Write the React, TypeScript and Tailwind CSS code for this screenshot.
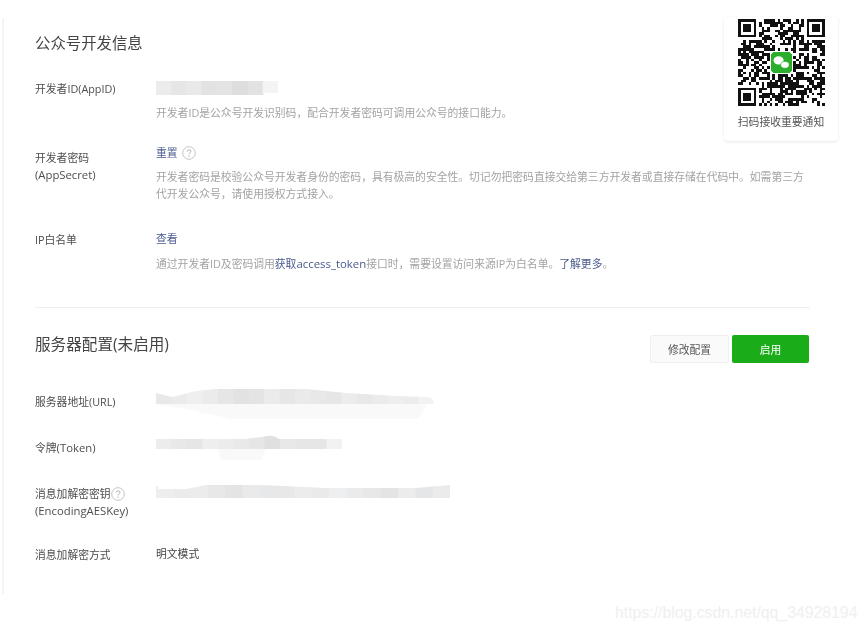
import { useMemo } from "react";

const link = "text-[#4a5a8f]";

function Help({ size = 14 }: { size?: number }) {
  return (
    <svg width={size} height={size} viewBox="0 0 14 14" className="inline-block shrink-0">
      <circle cx="7" cy="7" r="6.3" fill="none" stroke="#b5b5b5" strokeWidth="0.8" />
      <path d="M5.2 5.6c0-1.1.8-1.8 1.9-1.8s1.8.7 1.8 1.6c0 1.3-1.8 1.5-1.8 3" fill="none" stroke="#a0a0a0" strokeWidth="0.9" />
      <circle cx="7.1" cy="10.1" r="0.6" fill="#a0a0a0" />
    </svg>
  );
}

// mosaic that hides a value in the screenshot
function Smudge({ width, height, tones, shape, under }: { width: number; height: number; tones: string[]; shape: string; under?: string }) {
  const cell = width / tones.length;
  const id = shape.length + "-" + width;
  return (
    <svg width={width} height={height} viewBox={`0 0 ${width} ${height}`} className="block">
      <defs>
        <clipPath id={`c${id}`}>
          <path d={shape} />
        </clipPath>
      </defs>
      {under && <path d={under} fill="#f9f9f9" />}
      <g clipPath={`url(#c${id})`}>
        {tones.map((t, i) => (
          <rect key={i} x={i * cell} y={0} width={cell + 0.5} height={height} fill={t} />
        ))}
      </g>
    </svg>
  );
}

function Qr() {
  const size = 33;
  const cells = useMemo(() => {
    const out: [number, number][] = [];
    let seed = 20417;
    const inFinder = (x: number, y: number, ox: number, oy: number) => x >= ox - 1 && x <= ox + 7 && y >= oy - 1 && y <= oy + 7;
    for (let y = 0; y < size; y++) {
      for (let x = 0; x < size; x++) {
        seed = (seed * 1103515 + 12345) & 0x7fffffff;
        if (inFinder(x, y, 0, 0) || inFinder(x, y, 26, 0) || inFinder(x, y, 0, 26)) continue;
        if ((seed >> 12) % 100 < 58) out.push([x, y]);
      }
    }
    return out;
  }, []);
  const finders = [[0, 0], [26, 0], [0, 26]];
  return (
    <svg width="87" height="87" viewBox="0 0 33 33" shapeRendering="crispEdges" className="block">
      {cells.map(([x, y]) => (
        <rect key={`${x}-${y}`} x={x} y={y} width="1" height="1" fill="#111" />
      ))}
      {finders.map(([x, y]) => (
        <g key={`${x}${y}`}>
          <path d={`M${x} ${y}h7v7h-7zM${x + 1} ${y + 1}v5h5v-5z`} fill="#111" fillRule="evenodd" />
          <rect x={x + 2} y={y + 2} width="3" height="3" fill="#111" />
        </g>
      ))}
      <rect x="12.2" y="12.2" width="8.6" height="8.6" fill="#fff" />
      <rect x="12.7" y="12.7" width="7.6" height="7.6" rx="0.6" fill="#2aae2b" />
      <ellipse cx="15.4" cy="15.7" rx="1.9" ry="1.6" fill="#fff" shapeRendering="auto" />
      <ellipse cx="17.8" cy="17.4" rx="1.6" ry="1.3" fill="#fff" stroke="#2aae2b" strokeWidth="0.25" shapeRendering="auto" />
    </svg>
  );
}

function Row({ label, className, children }: { label: React.ReactNode; className?: string; children: React.ReactNode }) {
  return (
    <div className={`grid grid-cols-[121px_1fr] ${className ?? ""}`}>
      <div className="text-[#4d4d4d]">{label}</div>
      <div>{children}</div>
    </div>
  );
}

export default function App() {
  return (
    <div className="relative h-[631px] w-[867px] overflow-hidden bg-white text-[10.8px] leading-[17px] [font-family:'Open_Sans','Noto_Sans_CJK_SC',sans-serif]">
      <div className="ml-[2px] h-[576px] translate-y-[18px] border-l-2 border-[#f5f5f5]" />

      <div className="absolute top-0 left-0 w-full blur-[0.4px]">
        <div className="pt-[34px] pr-[57px] pl-[35px]">
          <h2 className="text-[15.4px] leading-[20px] text-[#444]">公众号开发信息</h2>

          <Row label="开发者ID(AppID)" className="mt-[26px]">
            <Smudge width={122} height={16} tones={["#ececec", "#e6e6e6", "#e9e9e9", "#e2e2e2", "#e4e4e4", "#dedede", "#e2e2e2", "#f4f4f4"]} shape="M0 1H112L122 1V13H108V15H0Z" />
            <p className="mt-[8px] text-[#a3a3a3]">开发者ID是公众号开发识别码，配合开发者密码可调用公众号的接口能力。</p>
          </Row>

          <Row
            label={
              <div className="flex flex-col">
                <span>开发者密码</span>
                <span className="text-[11.3px]">(AppSecret)</span>
              </div>
            }
            className="mt-[28px]"
          >
            <div className="-mt-[5px] flex items-center gap-[4px]">
              <span className={link}>重置</span>
              <Help />
            </div>
            <p className="mt-[7px] w-[652px] text-[#a3a3a3]">
              开发者密码是校验公众号开发者身份的密码，具有极高的安全性。切记勿把密码直接交给第三方开发者或直接存储在代码中。如需第三方代开发公众号，请使用授权方式接入。
            </p>
          </Row>

          <Row label="IP白名单" className="mt-[29px]">
            <div className="-mt-[1px]">
              <span className={link}>查看</span>
            </div>
            <p className="mt-[8px] text-[#a3a3a3]">
              通过开发者ID及密码调用<span className={link}>获取<span className="text-[11.4px]">access_token</span></span>接口时，需要设置访问来源IP为白名单。<span className={link}>了解更多</span>。
            </p>
          </Row>

          <hr className="mt-[35px] border-[#eeeeee]" />

          <div className="mt-[27px] flex items-start justify-between">
            <h2 className="-mt-[1px] text-[15.6px] leading-[20px] text-[#444]">服务器配置(未启用)</h2>
            <div className="mr-[1px] flex gap-[3px]">
              <button className="h-[28px] w-[79px] rounded-[2px] border border-[#efefef] bg-[#fafafa] text-[#555]">修改配置</button>
              <button className="h-[28px] w-[77px] rounded-[2px] bg-[#1aad19] text-white">启用</button>
            </div>
          </div>

          <Row label="服务器地址(URL)" className="mt-[30px] items-start">
            <div className="-mt-[4px]">
              <Smudge
                width={278}
                height={31}
                tones={["#e8e8e8", "#ebebeb", "#efefef", "#ebebeb", "#e6e6e6", "#e2e2e2", "#e4e4e4", "#ebebeb", "#e6e6e6", "#eaeaea", "#e8e8e8", "#e6e6e6", "#ececec", "#e8e8e8", "#ebebeb", "#eeeeee", "#ececec", "#f2f2f2"]}
                shape="M0 4L16 8L40 2L60 0H150L190 4L240 7L272 8Q278 9 278 15H0Z"
                under="M0 15H272L262 30H76L30 20L0 15Z"
              />
            </div>
          </Row>

          <Row
            label={
              <>
                令牌<span className="text-[11.3px]">(Token)</span>
              </>
            }
            className="mt-[19px]"
          >
            <div className="-mt-[4px]">
              <Smudge
                width={186}
                height={27}
                tones={["#ececec", "#e8e8e8", "#e6e6e6", "#eeeeee", "#ececec", "#e9e9e9", "#e6e6e6", "#dfe0e2", "#e8e8e8", "#e6e6e6", "#e6e6e6", "#f2f2f2"]}
                shape="M0 4H90L112 1Q118 0 123 4H186V14H0Z"
                under="M62 14H110L105 25H65Z"
              />
            </div>
          </Row>

          <Row
            label={
              <div className="flex flex-col">
                <span className="flex items-center">
                  消息加解密密钥
                  <Help />
                </span>
                <span className="text-[11.3px]">(EncodingAESKey)</span>
              </div>
            }
            className="mt-[23px]"
          >
            <div className="-mt-[1px]">
              <Smudge
                width={294}
                height={20}
                tones={["#eeeeee", "#ebebeb", "#ececec", "#e8e8e8", "#e4e4e4", "#eaeaea", "#e6e8ea", "#e8e8e8", "#ececec", "#eaeaea", "#eeeff1", "#ebebeb", "#e8e8e8", "#e4e4e4", "#ececec", "#e4e6e8", "#ebebeb"]}
                shape="M0 2H2V5H30L50 1H105L170 4H260L294 1V14H0Z"
              />
            </div>
          </Row>

          <Row label="消息加解密方式" className="mt-[27px]">
            <div className="-mt-[1px] text-[#444]">明文模式</div>
          </Row>
        </div>
      </div>

      <div className="absolute top-[17px] left-[724px] flex h-[124px] w-[114px] flex-col items-center rounded-b-[4px] bg-white pt-[2px] shadow-[0_1px_3px_rgba(0,0,0,0.10)] blur-[0.4px]">
        <Qr />
        <p className="mt-[7px] text-[#555]">扫码接收重要通知</p>
      </div>

      <div className="absolute top-[603px] left-[615px] text-[15.8px] leading-[20px] text-[#efefef] [font-family:'Liberation_Sans',sans-serif]">
        https://blog.csdn.net/qq_34928194
      </div>
    </div>
  );
}
